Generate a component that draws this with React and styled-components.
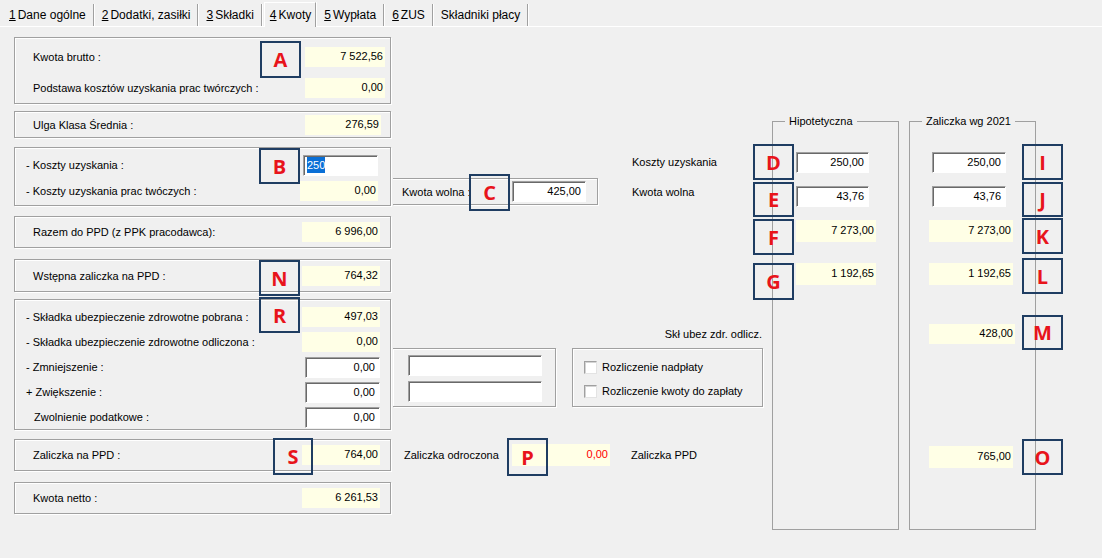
import React from 'react';
import styled, { createGlobalStyle } from 'styled-components';

const GlobalStyle = createGlobalStyle`
  html, body {
    margin: 0;
    padding: 0;
    background: #f0f0f0;
  }
  body {
    font-family: "Liberation Sans", Arial, sans-serif;
    font-size: 11px;
    color: #000;
  }
`;

const Window = styled.div`
  position: relative;
  width: 1102px;
  height: 558px;
  overflow: hidden;
  background: #f0f0f0;
`;

const TabBar = styled.div`
  display: flex;
  align-items: flex-end;
  gap: 2px;
  height: 27px;
  padding-left: 3px;
  box-sizing: border-box;
  border-bottom: 1px solid #fff;
`;

const Tab = styled.div`
  display: flex;
  align-items: center;
  box-sizing: border-box;
  height: ${({ $active }) => ($active ? '25px' : '22px')};
  padding: ${({ $active }) => ($active ? '0 4px 0 5px' : '0 7px 0 6px')};
  font-size: 12px;
  white-space: nowrap;
  border-right: 1px solid #a0a0a0;
  box-shadow: 1px 0 0 #fff;
  margin-bottom: ${({ $active }) => ($active ? '-1px' : '0')};
  background: #f0f0f0;
  border-left: ${({ $active }) => ($active ? '1px solid #fff' : 'none')};
  border-top: ${({ $active }) => ($active ? '1px solid #fff' : 'none')};

  u {
    text-decoration: underline;
    margin-right: 2px;
  }
`;

const Form = styled.div`
  display: grid;
  grid-template-columns: 377px 381px 137px 127px;
  grid-template-rows: 67px 7px 27px 9px 59px 10px 32px 11px 33px 7px 131px 9px 32px 11px 32px 16px;
  padding: 10px 0 0 14px;
`;

const Cell = styled.div`
  grid-column: ${({ $col }) => $col};
  grid-row: ${({ $row }) => $row};
  min-width: 0;
  display: flex;
  flex-direction: column;
  box-sizing: border-box;
`;

const Panel = styled(Cell)`
  border: 1px solid #a0a0a0;
  box-shadow: inset 1px 1px 0 #fff, 1px 1px 0 #fff;
  justify-content: ${({ $single }) => ($single ? 'center' : 'flex-start')};
  padding: ${({ $pad }) => $pad};
  gap: ${({ $gap }) => $gap || 0}px;
`;

const FieldRow = styled.div`
  display: flex;
  align-items: center;
  justify-content: space-between;
  height: ${({ $h }) => $h || 20}px;
`;

const Label = styled.span`
  white-space: nowrap;
  padding-left: ${({ $indent }) => $indent || 0}px;
  margin-left: ${({ $ml }) => $ml || 0}px;
  width: ${({ $w }) => ($w ? `${$w}px` : 'auto')};
  flex-shrink: 0;
`;

const Value = styled.div`
  width: ${({ $w }) => $w || 78}px;
  height: ${({ $h }) => $h || 20}px;
  line-height: ${({ $h }) => ($h || 20) - 2}px;
  box-sizing: border-box;
  padding-right: 2px;
  background: #ffffe6;
  text-align: right;
  color: ${({ $red }) => ($red ? '#f00' : '#000')};
  flex-shrink: 0;
`;

const NumInput = styled.div`
  width: ${({ $w }) => $w || 75}px;
  height: 21px;
  line-height: 19px;
  box-sizing: border-box;
  background: #fff;
  border-top: 1px solid #a0a0a0;
  border-left: 1px solid #a0a0a0;
  border-right: 1px solid #fff;
  border-bottom: 1px solid #fff;
  box-shadow: inset 1px 1px 0 #696969;
  padding: 0 4px 0 3px;
  text-align: ${({ $left }) => ($left ? 'left' : 'right')};
  flex-shrink: 0;
`;

const Selected = styled.span`
  background: #0a6fd6;
  color: #fff;
  padding: 2px 0;
`;

const Band = styled(Cell)`
  flex-direction: row;
  align-items: flex-start;
`;

const SidePanel = styled.div`
  display: flex;
  align-items: center;
  justify-content: space-between;
  align-self: flex-end;
  width: ${({ $w }) => $w}px;
  height: 27px;
  box-sizing: border-box;
  margin: 0 0 1px 2px;
  padding: 0 11px 0 9px;
  border: 1px solid #a0a0a0;
  border-left: none;
  box-shadow: inset 0 1px 0 #fff, 1px 1px 0 #fff;
`;

const SideLabels = styled.div`
  display: flex;
  flex-direction: column;
  gap: 16px;
  margin-left: 34px;
  padding-top: 8px;
  line-height: 14px;
`;

const Column = styled(Cell)`
  padding: ${({ $pad }) => $pad};
  gap: ${({ $gap }) => $gap || 0}px;
`;

const Note = styled.div`
  text-align: right;
  padding-right: 10px;
  margin-top: 28px;
  line-height: 14px;
`;

const PanelRow = styled.div`
  display: flex;
  margin-top: 7px;
`;

const Box = styled.div`
  display: flex;
  flex-direction: column;
  box-sizing: border-box;
  width: ${({ $w }) => $w}px;
  height: 59px;
  margin-left: ${({ $ml }) => $ml}px;
  padding: ${({ $pad }) => $pad};
  gap: ${({ $gap }) => $gap}px;
  border: 1px solid #a0a0a0;
  border-left: ${({ $noLeft }) => ($noLeft ? 'none' : '1px solid #a0a0a0')};
  box-shadow: inset 1px 1px 0 #fff, 1px 1px 0 #fff;
`;

const CheckRow = styled.label`
  display: flex;
  align-items: center;
  gap: 5px;
  height: 14px;
  white-space: nowrap;
`;

const CheckSquare = styled.span`
  width: 13px;
  height: 13px;
  box-sizing: border-box;
  background: #fff;
  border-top: 1px solid #a0a0a0;
  border-left: 1px solid #a0a0a0;
  border-right: 1px solid #e3e3e3;
  border-bottom: 1px solid #e3e3e3;
  box-shadow: inset 1px 1px 0 #d4d4d4;
`;

const InlineRow = styled(Cell)`
  flex-direction: row;
  align-items: center;
  padding-left: 13px;
`;

const Group = styled.fieldset`
  grid-column: ${({ $col }) => $col};
  grid-row: 3 / 17;
  margin: 3px 0 0 0;
  padding: 0;
  min-width: 0;
  width: 127px;
  box-sizing: border-box;
  border: 1px solid #a0a0a0;

  legend {
    margin-left: 12px;
    padding: 0 4px;
    line-height: 14px;
  }
`;

const Marker = styled.div`
  position: absolute;
  left: ${({ $x }) => $x}px;
  top: ${({ $y }) => $y}px;
  width: ${({ $w }) => $w || 41}px;
  height: ${({ $h }) => $h || 36}px;
  box-sizing: border-box;
  border: 2px solid #1f3d62;
  display: flex;
  align-items: center;
  justify-content: center;
  color: #e8141b;
  font-family: "Open Sans", "Liberation Sans", sans-serif;
  font-weight: 700;
  font-size: 20px;
`;

const tabs = [
  { key: '1', label: 'Dane ogólne' },
  { key: '2', label: 'Dodatki, zasiłki' },
  { key: '3', label: 'Składki' },
  { key: '4', label: 'Kwoty', active: true },
  { key: '5', label: 'Wypłata' },
  { key: '6', label: 'ZUS' },
  { key: null, label: 'Składniki płacy' },
];

const markers = [
  { l: 'A', x: 260, y: 41, h: 37 },
  { l: 'B', x: 259, y: 148 },
  { l: 'C', x: 469, y: 174, h: 37 },
  { l: 'N', x: 259, y: 260 },
  { l: 'R', x: 259, y: 297 },
  { l: 'S', x: 273, y: 438, w: 40, h: 37 },
  { l: 'P', x: 507, y: 438, h: 38 },
  { l: 'D', x: 753, y: 144 },
  { l: 'E', x: 753, y: 182, h: 35 },
  { l: 'F', x: 753, y: 219 },
  { l: 'G', x: 753, y: 263, h: 37 },
  { l: 'I', x: 1022, y: 144 },
  { l: 'J', x: 1022, y: 182, h: 35 },
  { l: 'K', x: 1022, y: 218 },
  { l: 'L', x: 1022, y: 258 },
  { l: 'M', x: 1022, y: 315, h: 35 },
  { l: 'O', x: 1022, y: 439 },
];

export default function App() {
  return (
    <Window>
      <GlobalStyle />
      <TabBar>
        {tabs.map((t) => (
          <Tab key={t.label} $active={t.active}>
            {t.key && <u>{t.key}</u>}
            {t.label}
          </Tab>
        ))}
      </TabBar>

      <Form>
        <Group $col={3}>
          <legend>Hipotetyczna</legend>
        </Group>
        <Group $col={4}>
          <legend>Zaliczka wg 2021</legend>
        </Group>

        {/* left column */}
        <Panel $col={1} $row={1} $pad="9px 5px 0 18px" $gap={11}>
          <FieldRow>
            <Label>Kwota brutto :</Label>
            <Value $w={80}>7 522,56</Value>
          </FieldRow>
          <FieldRow>
            <Label>Podstawa kosztów uzyskania prac twórczych :</Label>
            <Value $w={80}>0,00</Value>
          </FieldRow>
        </Panel>

        <Panel $col={1} $row={3} $single $pad="0 9px 0 18px">
          <FieldRow>
            <Label>Ulga Klasa Średnia :</Label>
            <Value $w={76}>276,59</Value>
          </FieldRow>
        </Panel>

        <Panel $col={1} $row={5} $pad="7px 12px 0 11px" $gap={6}>
          <FieldRow>
            <Label>- Koszty uzyskania :</Label>
            <NumInput $left>
              <Selected>250</Selected>
            </NumInput>
          </FieldRow>
          <FieldRow>
            <Label>- Koszty uzyskania prac twóczych :</Label>
            <Value $w={78}>0,00</Value>
          </FieldRow>
        </Panel>

        <Panel $col={1} $row={7} $single $pad="0 10px 0 18px">
          <FieldRow>
            <Label>Razem do PPD (z PPK pracodawca):</Label>
            <Value $w={78}>6 996,00</Value>
          </FieldRow>
        </Panel>

        <Panel $col={1} $row={9} $single $pad="0 10px 0 18px">
          <FieldRow>
            <Label>Wstępna zaliczka na PPD :</Label>
            <Value $w={78}>764,32</Value>
          </FieldRow>
        </Panel>

        <Panel $col={1} $row={11} $pad="6px 10px 0 11px" $gap={3}>
          <FieldRow $h={22}>
            <Label>- Składka ubezpieczenie zdrowotne pobrana :</Label>
            <Value $w={78}>497,03</Value>
          </FieldRow>
          <FieldRow $h={22}>
            <Label>- Składka ubezpieczenie zdrowotne odliczona :</Label>
            <Value $w={78}>0,00</Value>
          </FieldRow>
          <FieldRow $h={22}>
            <Label>- Zmniejszenie :</Label>
            <NumInput>0,00</NumInput>
          </FieldRow>
          <FieldRow $h={22}>
            <Label>+ Zwiększenie :</Label>
            <NumInput>0,00</NumInput>
          </FieldRow>
          <FieldRow $h={22}>
            <Label $indent={8}>Zwolnienie podatkowe :</Label>
            <NumInput>0,00</NumInput>
          </FieldRow>
        </Panel>

        <Panel $col={1} $row={13} $single $pad="0 10px 0 18px">
          <FieldRow>
            <Label>Zaliczka na PPD :</Label>
            <Value $w={78}>764,00</Value>
          </FieldRow>
        </Panel>

        <Panel $col={1} $row={15} $single $pad="0 10px 0 18px">
          <FieldRow>
            <Label>Kwota netto :</Label>
            <Value $w={78}>6 261,53</Value>
          </FieldRow>
        </Panel>

        {/* middle column */}
        <Band $col={2} $row={5}>
          <SidePanel $w={205}>
            <Label>Kwota wolna :</Label>
            <NumInput $w={74}>425,00</NumInput>
          </SidePanel>
          <SideLabels>
            <span>Koszty uzyskania</span>
            <span>Kwota wolna</span>
          </SideLabels>
        </Band>

        <Column $col={2} $row={11}>
          <Note>Skł ubez zdr. odlicz.</Note>
          <PanelRow>
            <Box $w={163} $ml={2} $noLeft $pad="6px 0 0 15px" $gap={5}>
              <NumInput $w={134} />
              <NumInput $w={134} />
            </Box>
            <Box $w={191} $ml={16} $pad="11px 0 0 11px" $gap={10}>
              <CheckRow>
                <CheckSquare />
                Rozliczenie nadpłaty
              </CheckRow>
              <CheckRow>
                <CheckSquare />
                Rozliczenie kwoty do zapłaty
              </CheckRow>
            </Box>
          </PanelRow>
        </Column>

        <InlineRow $col={2} $row={13}>
          <Label $w={108}>Zaliczka odroczona</Label>
          <Value $w={98} $h={22} $red>0,00</Value>
          <Label $ml={21}>Zaliczka PPD</Label>
        </InlineRow>

        {/* Hipotetyczna */}
        <Column $col={3} $row={5} $pad="5px 0 0 24px" $gap={13}>
          <NumInput $w={73}>250,00</NumInput>
          <NumInput $w={73}>43,76</NumInput>
        </Column>
        <Column $col={3} $row={7} $pad="4px 0 0 24px">
          <Value $w={80} $h={22}>7 273,00</Value>
        </Column>
        <Column $col={3} $row={9} $pad="4px 0 0 24px">
          <Value $w={80} $h={22}>1 192,65</Value>
        </Column>

        {/* Zaliczka wg 2021 */}
        <Column $col={4} $row={5} $pad="5px 0 0 23px" $gap={13}>
          <NumInput $w={74}>250,00</NumInput>
          <NumInput $w={74}>43,76</NumInput>
        </Column>
        <Column $col={4} $row={7} $pad="4px 0 0 20px">
          <Value $w={84} $h={22}>7 273,00</Value>
        </Column>
        <Column $col={4} $row={9} $pad="4px 0 0 20px">
          <Value $w={84} $h={22}>1 192,65</Value>
        </Column>
        <Column $col={4} $row={11} $pad="25px 0 0 20px">
          <Value $w={86} $h={20}>428,00</Value>
        </Column>
        <Column $col={4} $row={13} $pad="7px 0 0 20px">
          <Value $w={84} $h={22}>765,00</Value>
        </Column>
      </Form>

      {markers.map((m) => (
        <Marker key={m.l} $x={m.x} $y={m.y} $w={m.w} $h={m.h}>
          {m.l}
        </Marker>
      ))}
    </Window>
  );
}
